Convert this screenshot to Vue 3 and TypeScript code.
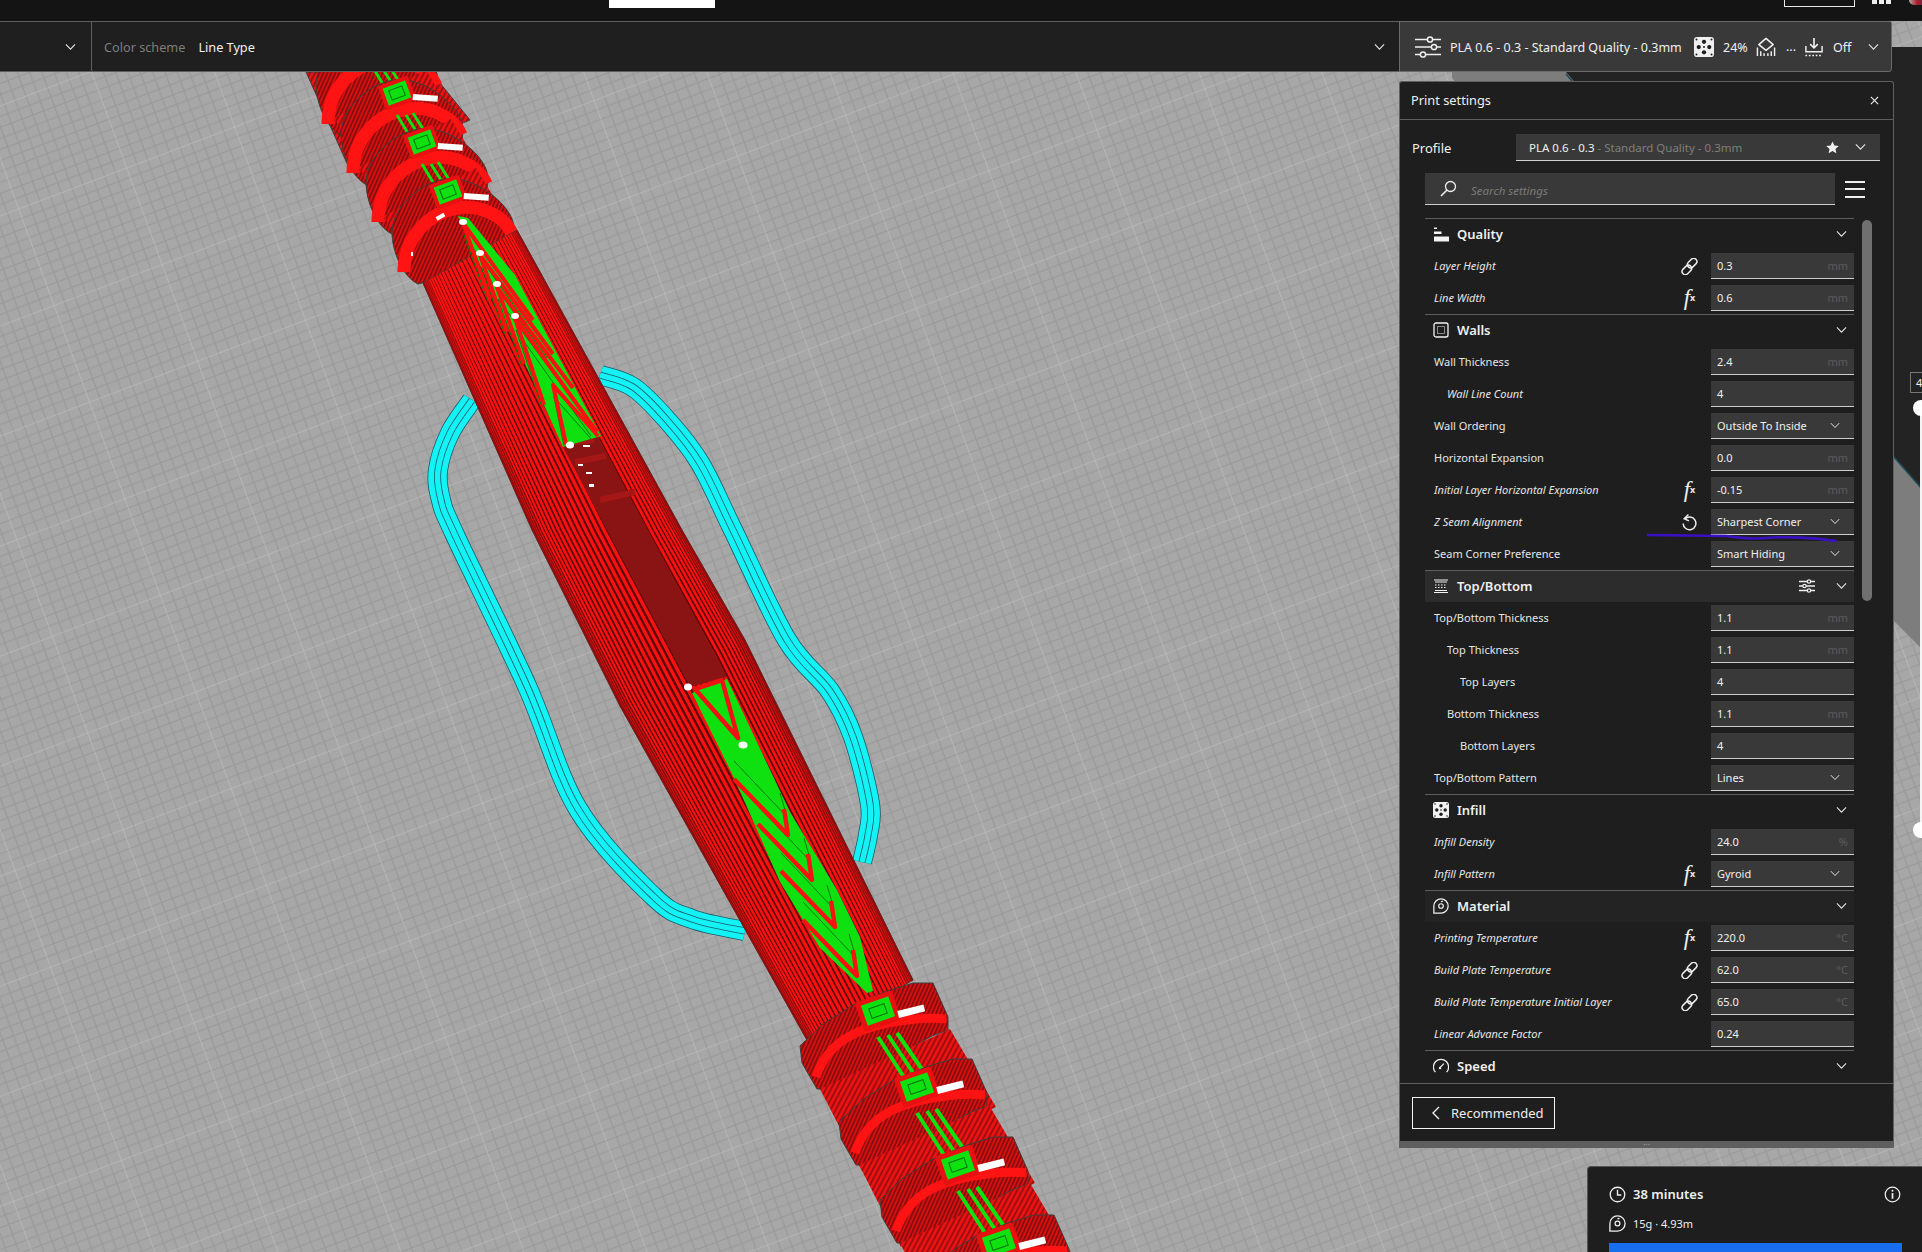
<script setup lang="ts">
type Pt = [number, number]
interface Row {
  label: string
  value: string
  unit?: string
  select?: boolean
  indent?: number
  italic?: boolean
  icon?: 'link' | 'fx' | 'reset'
}
interface Section {
  title: string
  icon: string
  tone?: string
  tune?: boolean
  rows: Row[]
}

const sections: Section[] = [
  {
    title: 'Quality',
    icon: 'i-quality',
    rows: [
      { label: 'Layer Height', value: '0.3', unit: 'mm', italic: true, icon: 'link' },
      { label: 'Line Width', value: '0.6', unit: 'mm', italic: true, icon: 'fx' }
    ]
  },
  {
    title: 'Walls',
    icon: 'i-walls',
    rows: [
      { label: 'Wall Thickness', value: '2.4', unit: 'mm' },
      { label: 'Wall Line Count', value: '4', indent: 1, italic: true },
      { label: 'Wall Ordering', value: 'Outside To Inside', select: true },
      { label: 'Horizontal Expansion', value: '0.0', unit: 'mm' },
      { label: 'Initial Layer Horizontal Expansion', value: '-0.15', unit: 'mm', italic: true, icon: 'fx' },
      { label: 'Z Seam Alignment', value: 'Sharpest Corner', select: true, italic: true, icon: 'reset' },
      { label: 'Seam Corner Preference', value: 'Smart Hiding', select: true }
    ]
  },
  {
    title: 'Top/Bottom',
    icon: 'i-topbottom',
    tone: 'hover',
    tune: true,
    rows: [
      { label: 'Top/Bottom Thickness', value: '1.1', unit: 'mm' },
      { label: 'Top Thickness', value: '1.1', unit: 'mm', indent: 1 },
      { label: 'Top Layers', value: '4', indent: 2 },
      { label: 'Bottom Thickness', value: '1.1', unit: 'mm', indent: 1 },
      { label: 'Bottom Layers', value: '4', indent: 2 },
      { label: 'Top/Bottom Pattern', value: 'Lines', select: true }
    ]
  },
  {
    title: 'Infill',
    icon: 'i-infill',
    rows: [
      { label: 'Infill Density', value: '24.0', unit: '%', italic: true },
      { label: 'Infill Pattern', value: 'Gyroid', select: true, italic: true, icon: 'fx' }
    ]
  },
  {
    title: 'Material',
    icon: 'i-spool',
    tone: 'soft',
    rows: [
      { label: 'Printing Temperature', value: '220.0', unit: '°C', italic: true, icon: 'fx' },
      { label: 'Build Plate Temperature', value: '62.0', unit: '°C', italic: true, icon: 'link' },
      { label: 'Build Plate Temperature Initial Layer', value: '65.0', unit: '°C', italic: true, icon: 'link' },
      { label: 'Linear Advance Factor', value: '0.24', italic: true }
    ]
  },
  { title: 'Speed', icon: 'i-speed', rows: [] }
]

// edges of the long shaft between the upper and lower collars
const shaftL: Pt[] = [[423, 283], [532, 530], [620, 706], [808, 1042]]
const shaftR: Pt[] = [[517, 230], [682, 530], [745, 640], [913, 980]]

const toPoints = (pts: Pt[]) => pts.map((p) => p.join(',')).join(' ')
const shaftOutline = toPoints([...shaftL, ...[...shaftR].reverse()])

// stripes bunch up at the edges, like lines wrapping round a cylinder
const shaftStripes = Array.from({ length: 38 }, (_, k) => {
  const a = ((k + 0.5) / 38) * Math.PI
  const t = (1 - Math.cos(a)) / 2
  const pts = shaftL.map((p, i): Pt => [
    p[0] + (shaftR[i][0] - p[0]) * t,
    p[1] + (shaftR[i][1] - p[1]) * t
  ])
  const s = Math.sin(a)
  return {
    points: toPoints(pts),
    width: 0.4 + s * 3,
    color: s > 0.45 ? '#fa1111' : s > 0.25 ? '#c81010' : '#9c0e0e'
  }
})

// smooth line through the measured skirt points
const smooth = (pts: Pt[]) => {
  let d = `M${pts[0][0]} ${pts[0][1]}`
  for (let i = 0; i < pts.length - 1; i++) {
    const p0 = pts[Math.max(i - 1, 0)]
    const p1 = pts[i]
    const p2 = pts[i + 1]
    const p3 = pts[Math.min(i + 2, pts.length - 1)]
    const c1 = [p1[0] + (p2[0] - p0[0]) / 6, p1[1] + (p2[1] - p0[1]) / 6]
    const c2 = [p2[0] - (p3[0] - p1[0]) / 6, p2[1] - (p3[1] - p1[1]) / 6]
    d += `C${c1[0]} ${c1[1]} ${c2[0]} ${c2[1]} ${p2[0]} ${p2[1]}`
  }
  return d
}
const skirt =
  smooth([[472, 400], [450, 433], [438, 470], [441, 500], [455, 535], [527, 686], [578, 809], [653, 896], [692, 919], [745, 931]]) +
  smooth([[600, 375], [633, 387], [667, 420], [700, 463], [733, 530], [787, 640], [830, 691], [853, 737], [870, 804], [868, 835], [862, 862]])
const skirtBands = [
  { w: 20, c: '#1d5a66' },
  { w: 18.4, c: '#13f2f5' },
  { w: 7, c: '#1d5a66' },
  { w: 5.4, c: '#13f2f5' }
]

const topChevrons: { apex: Pt; left: Pt; right: Pt }[] = [
  { apex: [463, 223], left: [490, 300], right: [533, 320] },
  { apex: [480, 255], left: [507, 332], right: [553, 354] },
  { apex: [497, 287], left: [524, 364], right: [573, 388] },
  { apex: [515, 318], left: [544, 405], right: [597, 432] },
  { apex: [553, 385], left: [566, 444], right: [598, 436] }
]
const lowChevrons: Pt[] = [[788, 835], [812, 880], [835, 927], [857, 976]]
const chevronShade = (c: { apex: Pt; left: Pt; right: Pt }) =>
  toPoints([
    [c.left[0] - 2, c.left[1] + 2],
    [c.apex[0] + 1, c.apex[1] + 12],
    [c.right[0] - 6, c.right[1] + 4]
  ])

const upperRings: Pt[] = [[372, 44], [397, 93], [422, 142], [448, 192]]
const lowerRings: Pt[] = [[878, 1011], [917, 1087], [958, 1165], [999, 1243]]
</script>

<template>
  <div class="app">
    <!-- print preview, everything here is a free canvas behind the UI -->
    <svg class="scene" width="1922" height="1252" viewBox="0 0 1922 1252">
      <defs>
        <pattern
          id="plate"
          width="100"
          height="100"
          patternUnits="userSpaceOnUse"
          patternTransform="matrix(1.08 -0.41 0.354 0.966 122.5 829.3)"
        >
          <rect width="100" height="100" fill="#a7a7a7" />
          <path
            d="M10 0V100M20 0V100M30 0V100M40 0V100M50 0V100M60 0V100M70 0V100M80 0V100M90 0V100M0 10H100M0 20H100M0 30H100M0 40H100M0 50H100M0 60H100M0 70H100M0 80H100M0 90H100"
            stroke="#999999"
            stroke-width="1"
            fill="none"
          />
          <path d="M0 0V100M0 0H100" stroke="#c2c2c2" stroke-width="0.9" fill="none" />
        </pattern>
        <pattern id="hatch" width="4.6" height="10" patternUnits="userSpaceOnUse" patternTransform="rotate(28)">
          <rect width="4.6" height="10" fill="#8c0e0e" />
          <rect x="0.6" width="2.9" height="10" fill="#f01212" />
        </pattern>
        <pattern id="ringhatch" width="3.6" height="10" patternUnits="userSpaceOnUse" patternTransform="rotate(24)">
          <rect width="3.6" height="10" fill="#780c0c" />
          <rect x="0.6" width="2" height="10" fill="#dc1010" />
        </pattern>
        <g id="ring-upper">
          <path
            d="M-56 40C-55 10-20-13 0-13 25-16 60 10 65 30 68 45 62 60 55 70L-30 92C-45 85-56 60-56 40Z"
            fill="url(#ringhatch)"
            stroke="#3d3d3d"
          />
          <path d="M-44 80C-44 42-16 20 10 16 30 13 56 22 64 42" fill="none" stroke="#ff1313" stroke-width="13" />
          <g transform="rotate(-20)">
            <rect x="-14" y="-11" width="28" height="22" rx="1" fill="#0fe00f" stroke="#e81010" stroke-width="4" />
            <rect x="-7" y="-5" width="14" height="10" fill="none" stroke="#0a6e0a" stroke-width="1" />
          </g>
          <rect x="16" y="1" width="25" height="6" fill="#fff" transform="rotate(4 16 1)" />
        </g>
        <g id="ring-lower">
          <path
            d="M-78 35-55 13-25-6 9-20 35-28 55-28 70 6 70 19 54 25-41 78-61 78-76 52Z"
            fill="url(#ringhatch)"
            stroke="#3d3d3d"
            stroke-linejoin="round"
          />
          <path d="M-62 66C-50 30-20 18 10 12 30 8 52 6 68 8" fill="none" stroke="#ff1313" stroke-width="9" />
          <g transform="rotate(-19)">
            <rect x="-17" y="-13" width="34" height="26" rx="1" fill="#0fe00f" stroke="#e81010" stroke-width="5" />
            <rect x="-8" y="-5" width="16" height="10" fill="none" stroke="#0a6e0a" stroke-width="1" />
          </g>
          <rect x="20" y="0" width="27" height="7" fill="#fff" transform="rotate(-14 20 3)" />
        </g>
        <g id="seg-upper">
          <polygon points="-38,74 54,26 82,72 -10,122" fill="url(#hatch)" />
          <path d="M0 22 30 72M9 22 39 70M16 20 46 68" stroke="#0fe00f" stroke-width="3" fill="none" />
        </g>
        <g id="seg-lower">
          <polygon points="-58,78 72,18 118,96 -16,160" fill="url(#hatch)" />
          <path d="M0 26 40 88M10 24 50 84M19 22 59 80" stroke="#0fe00f" stroke-width="4" fill="none" />
        </g>
      </defs>

      <rect width="1922" height="1252" fill="url(#plate)" />
      <polygon points="1566,72 1892,47 1922,47 1922,489 1893,456 1566,78" fill="#232323" />
      <polygon points="1452,72 1566,72 1893,456 1922,489 1922,649 1893,620 1452,78" fill="#7d7d7d" />
      <path d="M1566 74 1893 456 1922 489" fill="none" stroke="#1c4c58" stroke-width="1.5" />

      <!-- skirt round the part -->
      <g fill="none" stroke-linejoin="round">
        <path v-for="(s, i) in skirtBands" :key="i" :d="skirt" :stroke="s.c" :stroke-width="s.w" />
      </g>

      <!-- collars above the shaft -->
      <polygon points="306,72 431,72 470,120 350,170" fill="url(#hatch)" stroke="#3d3d3d" />
      <template v-for="(r, i) in upperRings" :key="'u' + i">
        <use href="#ring-upper" :transform="`translate(${r[0]} ${r[1]})`" />
        <use v-if="i < upperRings.length - 1" href="#seg-upper" :transform="`translate(${r[0]} ${r[1]})`" />
      </template>

      <!-- long shaft -->
      <polygon :points="shaftOutline" fill="#5c0808" stroke="#3d3d3d" />
      <polyline
        v-for="(s, i) in shaftStripes"
        :key="'s' + i"
        :points="s.points"
        fill="none"
        :stroke="s.color"
        :stroke-width="s.width"
      />

      <!-- cut-out at the middle of the shaft -->
      <polygon points="563,447 598,437 727,677 690,687" fill="#8a1414" />
      <path d="M570 442 594 440M575 462 606 456M600 500 635 492" stroke="#a51616" stroke-width="6" fill="none" />

      <!-- green infill wedges -->
      <polygon points="458,216 468,218 515,275 601,436 563,447" fill="#0fe00f" />
      <polyline
        v-for="(c, i) in topChevrons"
        :key="'g' + i"
        :points="chevronShade(c)"
        fill="none"
        stroke="#0a7a0a"
        stroke-width="1"
      />
      <polyline
        v-for="(c, i) in topChevrons"
        :key="'t' + i"
        :points="toPoints([c.left, c.apex, c.right])"
        fill="none"
        stroke="#fa1111"
        stroke-width="4"
        stroke-linejoin="round"
      />
      <polygon points="692,693 727,679 790,812 837,890 860,937 873,991 867,993 820,948 780,882 735,780" fill="#0fe00f" />
      <polygon points="695,689 722,680 738,738" fill="#0fe00f" stroke="#f01212" stroke-width="4.5" stroke-linejoin="round" />
      <polyline
        v-for="(a, i) in lowChevrons"
        :key="'d' + i"
        :points="toPoints([[a[0] - 54, a[1] - 74], [a[0] - 1, a[1] - 18], [a[0] - 8, a[1] - 42]])"
        fill="none"
        stroke="#0a7a0a"
        stroke-width="1"
      />
      <polyline
        v-for="(a, i) in lowChevrons"
        :key="'v' + i"
        :points="toPoints([[a[0] - 54, a[1] - 56], a, [a[0] - 4, a[1] - 26]])"
        fill="none"
        stroke="#fa1111"
        stroke-width="4.4"
        stroke-linejoin="round"
      />
      <g fill="#fff">
        <ellipse cx="463" cy="222" rx="4" ry="3" />
        <ellipse cx="480" cy="253" rx="4" ry="3" />
        <ellipse cx="497" cy="284" rx="4" ry="3" />
        <ellipse cx="515" cy="316" rx="4" ry="3" />
        <ellipse cx="570" cy="445" rx="4" ry="3.5" />
        <ellipse cx="688" cy="687" rx="4" ry="3.5" />
        <ellipse cx="743" cy="745" rx="4.5" ry="3.5" />
        <rect x="583" y="445" width="7" height="2" />
        <rect x="578" y="464" width="5" height="2" />
        <rect x="586" y="472" width="6" height="2" />
        <rect x="589" y="484" width="5" height="3" />
        <rect x="436" y="215" width="9" height="4" transform="rotate(-30 440 217)" />
        <rect x="411" y="252" width="2" height="4" />
      </g>

      <!-- collars below the shaft -->
      <template v-for="(r, i) in lowerRings" :key="'l' + i">
        <use href="#ring-lower" :transform="`translate(${r[0]} ${r[1]})`" />
        <use v-if="i < lowerRings.length - 1" href="#seg-lower" :transform="`translate(${r[0]} ${r[1]})`" />
      </template>

      <!-- shared icons -->
      <symbol id="i-chevron" viewBox="0 0 12 8">
        <path d="M1 1.2 6 6.4 11 1.2" fill="none" stroke="currentColor" stroke-width="1.2" />
      </symbol>
      <symbol id="i-quality" viewBox="0 0 16 16">
        <path d="M1 1.500H4V3H1ZM1 5.500H8.500V8H1ZM1 10.500H16V15.500H1Z" fill="currentColor" />
      </symbol>
      <symbol id="i-walls" viewBox="0 0 16 16">
        <rect x="1" y="1" width="14" height="14" rx="2" fill="none" stroke="currentColor" stroke-width="1.300" />
        <rect x="4.500" y="4.500" width="7" height="7" fill="none" stroke="currentColor" stroke-dasharray="1 1" />
      </symbol>
      <symbol id="i-topbottom" viewBox="0 0 16 16">
        <path d="M1 2H15M2 4H14M1 14.500H15M2 12.500H14" stroke="currentColor" fill="none" />
        <path d="M2 7H14M2 9.500H14" stroke="currentColor" stroke-dasharray="1.500 1.500" fill="none" />
      </symbol>
      <symbol id="i-infill" viewBox="0 0 16 16">
        <rect width="16" height="16" rx="2.500" fill="currentColor" />
        <g fill="#1e1e1e">
          <circle cx="8" cy="3.800" r="1.700" />
          <circle cx="8" cy="12.200" r="1.700" />
          <circle cx="3.800" cy="8" r="1.700" />
          <circle cx="12.200" cy="8" r="1.700" />
          <circle cx="8" cy="8" r="0.800" />
          <circle cx="2" cy="2" r="0.800" />
          <circle cx="14" cy="2" r="0.800" />
          <circle cx="2" cy="14" r="0.800" />
          <circle cx="14" cy="14" r="0.800" />
        </g>
      </symbol>
      <symbol id="i-spool" viewBox="0.6 0.6 16.800 16.800">
        <path d="M1.500 16.500V9A7.500 7.500 0 1 1 9 16.500Z" fill="none" stroke="currentColor" stroke-width="1.300" />
        <circle cx="9" cy="9" r="2.400" fill="none" stroke="currentColor" stroke-width="1.200" />
        <path d="M9 4.500 11 3.900" stroke="currentColor" stroke-width="1.200" />
      </symbol>
      <symbol id="i-speed" viewBox="0.6 0.6 16.800 16.800">
        <path d="M3.200 15.500A8 8 0 1 1 14.800 15.500" fill="none" stroke="currentColor" stroke-width="1.300" />
        <path d="M8.200 10.500 12 6.500" stroke="currentColor" stroke-width="1.300" />
        <circle cx="8" cy="11" r="1.300" fill="currentColor" />
      </symbol>
      <symbol id="i-link" viewBox="0 0 16 16">
        <g fill="none" stroke="currentColor" stroke-width="1.400">
          <rect x="5.500" y="1.800" width="10" height="6" rx="3" transform="rotate(-45 10.500 4.800)" />
          <rect x="0.500" y="8.200" width="10" height="6" rx="3" transform="rotate(-45 5.500 11.200)" />
        </g>
      </symbol>
      <symbol id="i-reset" viewBox="0 0 16 16">
        <path d="M3.800 4.500A6 6 0 1 1 2 9" fill="none" stroke="currentColor" stroke-width="1.400" />
        <path d="M7 0.500 3 4.500 7.500 6.500" fill="none" stroke="currentColor" stroke-width="1.400" />
      </symbol>
      <symbol id="i-tune" viewBox="0 0 16 14">
        <path d="M0 2.500H16M0 7H16M0 11.500H16" stroke="currentColor" stroke-width="1.300" />
        <circle cx="10" cy="2.500" r="1.700" fill="#2c2c2c" stroke="currentColor" stroke-width="1.200" />
        <circle cx="5.500" cy="7" r="1.700" fill="#2c2c2c" stroke="currentColor" stroke-width="1.200" />
        <circle cx="10" cy="11.500" r="1.700" fill="#2c2c2c" stroke="currentColor" stroke-width="1.200" />
      </symbol>
      <symbol id="i-clock" viewBox="0 0 18 18">
        <circle cx="9" cy="9" r="7.700" fill="none" stroke="currentColor" stroke-width="1.400" />
        <path d="M9 4V9.500H13" fill="none" stroke="currentColor" stroke-width="1.400" />
      </symbol>
      <symbol id="i-info" viewBox="0 0 18 18">
        <circle cx="9" cy="9" r="7.700" fill="none" stroke="currentColor" stroke-width="1.300" />
        <path d="M9 7.500V13.500" stroke="currentColor" stroke-width="1.800" />
        <circle cx="9" cy="5" r="1.100" fill="currentColor" />
      </symbol>
    </svg>

    <div class="topbar">
      <span class="top-white"></span>
      <span class="top-outline"></span>
      <span class="top-dots"><i></i><i></i><i></i></span>
      <span class="top-avatar"></span>
    </div>

    <header class="stagebar">
      <div class="stage-left">
        <svg class="chev"><use href="#i-chevron" /></svg>
      </div>
      <div class="stage-mid">
        <span class="scheme-label">Color scheme</span>
        <span class="scheme-value">Line Type</span>
        <svg class="chev scheme-chev"><use href="#i-chevron" /></svg>
      </div>
      <div class="stage-right">
        <svg class="hd-sliders" viewBox="0 0 26 22">
          <path d="M0 3.500H26M0 11H26M0 18.500H26" stroke="currentColor" stroke-width="1.500" />
          <circle cx="15" cy="3.500" r="2.600" fill="#393939" stroke="currentColor" stroke-width="1.500" />
          <circle cx="19" cy="11" r="2.600" fill="#393939" stroke="currentColor" stroke-width="1.500" />
          <circle cx="8" cy="18.500" r="2.600" fill="#393939" stroke="currentColor" stroke-width="1.500" />
        </svg>
        <span class="hd-profile">PLA 0.6 - 0.3 - Standard Quality - 0.3mm</span>
        <svg class="hd-icon infill-i"><use href="#i-infill" /></svg>
        <span class="hd-infill">24%</span>
        <svg class="hd-icon support-i" viewBox="0 0 20 21">
          <path d="M10 1.500 17.500 8 10 14 2.500 8Z" fill="none" stroke="currentColor" stroke-width="1.600" stroke-linejoin="round" />
          <path d="M1 11V20M4.500 15V20M8 17V20M12 17V20M15.500 15V20M19 11V20" stroke="currentColor" stroke-width="1.500" />
        </svg>
        <span class="hd-dots">...</span>
        <svg class="hd-icon adhesion-i" viewBox="0 0 20 21">
          <path d="M10 1V11M6 7.500 10 11.500 14 7.500" fill="none" stroke="currentColor" stroke-width="1.700" />
          <path d="M1.500 9.500V15.500H18.500V9.500" fill="none" stroke="currentColor" stroke-width="1.500" />
          <path d="M1 19.500H19" stroke="currentColor" stroke-width="1.500" stroke-dasharray="1.800 1.800" />
        </svg>
        <span class="hd-off">Off</span>
        <svg class="chev hd-chev"><use href="#i-chevron" /></svg>
      </div>
    </header>

    <!-- floats over the viewport -->
    <aside class="panel">
      <div class="panel-title">
        <span>Print settings</span>
        <svg class="close" viewBox="0 0 10 10"><path d="M1 1 9 9M9 1 1 9" stroke="currentColor" stroke-width="1.200" /></svg>
      </div>
      <div class="profile-row">
        <span class="profile-label">Profile</span>
        <div class="profile-box">
          <span class="profile-name">PLA 0.6 - 0.3<em> - Standard Quality - 0.3mm</em></span>
          <svg class="star" viewBox="0 0 14 14"><path d="M7 .6 9 4.900 13.700 5.400 10.200 8.600 11.200 13.300 7 10.900 2.800 13.300 3.800 8.600.3 5.400 5 4.900Z" fill="currentColor" /></svg>
          <svg class="chev"><use href="#i-chevron" /></svg>
        </div>
      </div>
      <div class="search-row">
        <div class="search-box">
          <svg class="search-i" viewBox="0 0 17 17"><circle cx="10.500" cy="6.500" r="5" fill="none" stroke="currentColor" stroke-width="1.300" /><path d="M7 10 1 16" stroke="currentColor" stroke-width="1.600" /></svg>
          <span class="search-text">Search settings</span>
        </div>
        <div class="burger"><i></i><i></i><i></i></div>
      </div>
      <div class="settings">
        <div class="list">
          <section v-for="sec in sections" :key="sec.title" class="section">
            <div class="sec-head" :class="sec.tone">
              <svg class="sec-icon"><use :href="'#' + sec.icon" /></svg>
              <span class="sec-title">{{ sec.title }}</span>
              <svg v-if="sec.tune" class="sec-tune"><use href="#i-tune" /></svg>
              <svg class="chev sec-chev"><use href="#i-chevron" /></svg>
            </div>
            <div v-for="row in sec.rows" :key="row.label" class="row">
              <span class="row-label" :class="[{ italic: row.italic }, row.indent ? 'indent-' + row.indent : '']">{{ row.label }}</span>
              <span v-if="row.icon === 'fx'" class="row-icon fx">f<sub>x</sub></span>
              <svg v-else-if="row.icon" class="row-icon"><use :href="'#i-' + row.icon" /></svg>
              <div class="field">
                <span class="field-value">{{ row.value }}</span>
                <span v-if="row.unit" class="field-unit">{{ row.unit }}</span>
                <svg v-if="row.select" class="chev field-chev"><use href="#i-chevron" /></svg>
              </div>
            </div>
          </section>
        </div>
        <div class="scrollbar"></div>
      </div>
      <div class="panel-foot">
        <button class="back">
          <svg viewBox="0 0 9 14"><path d="M8 1 2 7 8 13" fill="none" stroke="currentColor" stroke-width="1.400" /></svg>
          Recommended
        </button>
      </div>
      <div class="grip"><span>···</span></div>
    </aside>

    <svg class="scribble" width="200" height="12" viewBox="0 0 200 12">
      <path d="M2 3 80 4C100 7 110 7 120 6 140 4 170 6 190 9" fill="none" stroke="#3a10c4" stroke-width="2.600" stroke-linecap="round" />
    </svg>

    <div class="slider">
      <span class="slider-label">4</span>
      <span class="slider-knob top"></span>
      <span class="slider-knob bottom"></span>
    </div>

    <div class="summary">
      <div class="sum-row">
        <svg class="sum-icon"><use href="#i-clock" /></svg>
        <span class="sum-time">38 minutes</span>
        <svg class="sum-icon sum-info"><use href="#i-info" /></svg>
      </div>
      <div class="sum-row second">
        <svg class="sum-icon"><use href="#i-spool" /></svg>
        <span class="sum-mat">15g · 4.93m</span>
      </div>
      <div class="slice"></div>
    </div>
  </div>
</template>

<style scoped>
.app {
  position: relative;
  width: 1922px;
  height: 1252px;
  overflow: hidden;
  font-family: 'Noto Sans', 'Open Sans', sans-serif;
  color: #f0f0f0;
}
.scene {
  position: absolute;
  left: 0;
  top: 0;
}
.chev {
  width: 11px;
  height: 8px;
  color: #e4e4e4;
  flex: none;
}

.topbar {
  position: relative;
  display: flex;
  align-items: flex-start;
  height: 21px;
  padding-left: 609px;
  background: #141414;
}
.topbar > span {
  flex: none;
}
.top-white {
  width: 106px;
  height: 8px;
  background: #fff;
}
.top-outline {
  width: 71px;
  height: 7px;
  margin-left: 1069px;
  border: 1px solid #e8e8e8;
  border-top: 0;
  box-sizing: border-box;
}
.top-dots {
  display: flex;
  gap: 2px;
  margin-left: 17px;
}
.top-dots i {
  width: 5px;
  height: 4px;
  background: #eee;
}
.top-avatar {
  width: 20px;
  height: 5px;
  margin-left: 18px;
  border-radius: 0 0 0 14px;
  background: linear-gradient(90deg, #aaa, #b01c2c 40%, #24345c);
}

.stagebar {
  position: relative;
  display: flex;
  width: 1892px;
  height: 51px;
}
.stage-left {
  display: flex;
  align-items: center;
  justify-content: flex-end;
  width: 92px;
  padding-right: 15px;
  box-sizing: border-box;
  background: #1f1f1f;
  border: solid #5e5e5e;
  border-width: 1px 1px 1px 0;
}
.stage-mid {
  display: flex;
  flex: 1;
  align-items: center;
  padding-left: 12px;
  padding-right: 14px;
  background: #1f1f1f;
  border: solid #5e5e5e;
  border-width: 1px 0;
  font-size: 12.7px;
}
.scheme-label {
  color: #7d7d7d;
  margin-top: 1px;
}
.scheme-value {
  margin-left: 13px;
  margin-top: 1px;
}
.scheme-chev {
  margin-left: auto;
}
.stage-right {
  display: flex;
  align-items: center;
  width: 493px;
  box-sizing: border-box;
  padding-left: 15px;
  background: #393939;
  border: 1px solid #6b6b6b;
  border-radius: 0 2px 3px 0;
  font-size: 12.5px;
}
.hd-sliders {
  width: 26px;
  height: 22px;
  flex: none;
}
.hd-profile {
  margin-left: 9px;
  margin-top: 1px;
  width: 244px;
  white-space: nowrap;
}
.hd-icon {
  width: 20px;
  height: 20px;
  flex: none;
}
.hd-infill {
  margin-left: 9px;
  margin-top: 1px;
  width: 33px;
}
.hd-dots {
  margin-left: 10px;
  width: 18px;
}
.hd-off {
  margin-left: 9px;
  margin-top: 1px;
  width: 35px;
}

.panel {
  position: absolute;
  left: 1399px;
  top: 81px;
  display: flex;
  flex-direction: column;
  width: 495px;
  height: 1067px;
  box-sizing: border-box;
  background: #1e1e1e;
  border: 1px solid #606060;
  border-bottom: 0;
  border-radius: 3px 3px 0 0;
}
.panel-title {
  display: flex;
  align-items: center;
  justify-content: space-between;
  flex: none;
  padding: 0 12px 1px 11px;
  box-sizing: content-box;
  height: 36px;
  border-bottom: 1px solid #5e5e5e;
  font-size: 12.8px;
}
.close {
  width: 9px;
  height: 9px;
  margin-right: 2px;
}
.profile-row {
  display: flex;
  align-items: center;
  justify-content: space-between;
  flex: none;
  height: 27px;
  margin-top: 14px;
  padding: 0 13px 0 12px;
  font-size: 13px;
}
.profile-box {
  display: flex;
  align-items: center;
  width: 364px;
  height: 27px;
  box-sizing: border-box;
  padding: 0 14px 0 13px;
  background: #393939;
  border-bottom: 1px solid #cfcfcf;
  font-size: 11.5px;
}
.profile-name {
  flex: 1;
}
.profile-name em {
  font-style: normal;
  color: #7f7f7f;
}
.star {
  width: 13px;
  height: 13px;
  margin-right: 16px;
}
.search-row {
  display: flex;
  align-items: center;
  flex: none;
  height: 32px;
  margin-top: 12px;
  padding-left: 25px;
}
.search-box {
  display: flex;
  align-items: center;
  width: 410px;
  height: 32px;
  box-sizing: border-box;
  padding-left: 15px;
  background: #393939;
  border-bottom: 1px solid #cfcfcf;
  font-size: 11.5px;
  font-style: italic;
  color: #7a7a7a;
}
.search-text {
  padding-top: 3px;
}
.search-i {
  width: 17px;
  height: 17px;
  margin-right: 14px;
  color: #eee;
}
.burger {
  display: flex;
  flex-direction: column;
  justify-content: space-between;
  width: 20px;
  height: 17px;
  margin-left: 10px;
}
.burger i {
  height: 2px;
  background: #eee;
}
.settings {
  position: relative;
  flex: 1;
  margin-top: 13px;
  padding-left: 25px;
  overflow: hidden;
}
.list {
  width: 429px;
}
.section {
  font-size: 11px;
}
.sec-head {
  display: flex;
  align-items: center;
  height: 32px;
  box-sizing: border-box;
  padding: 0 7px 2px 8px;
  border-top: 1px solid #5e5e5e;
}
.sec-head.hover {
  background: #2c2c2c;
}
.sec-head.soft {
  background: #232323;
}
.sec-icon {
  width: 16px;
  height: 16px;
  flex: none;
  color: #f2f2f2;
}
.sec-title {
  margin-left: 8px;
  font-size: 13px;
  font-weight: 600;
}
.sec-tune {
  width: 16px;
  height: 14px;
  margin-left: auto;
  margin-right: 21px;
}
.sec-chev {
  margin-left: auto;
}
.sec-tune + .sec-chev {
  margin-left: 0;
}
.row {
  display: flex;
  align-items: center;
  height: 32px;
}
.row-label {
  flex: 1;
  margin-left: 9px;
  margin-bottom: 2px;
  color: #e6e6e6;
  white-space: nowrap;
}
.row-label.italic {
  font-style: italic;
}
.row-label.indent-1 {
  margin-left: 22px;
}
.row-label.indent-2 {
  margin-left: 35px;
}
.row-icon {
  width: 17px;
  height: 17px;
  margin-right: 13px;
  color: #eee;
  flex: none;
}
.row-icon.fx {
  display: flex;
  align-items: center;
  justify-content: center;
  height: 20px;
  font-family: 'Liberation Serif', serif;
  font-size: 23px;
  font-style: italic;
  line-height: 20px;
}
.row-icon.fx sub {
  font-family: 'Noto Sans', sans-serif;
  font-size: 9px;
  font-style: normal;
  font-weight: 700;
  line-height: 0;
  vertical-align: -5px;
}
.field {
  display: flex;
  align-items: center;
  flex: none;
  width: 143px;
  height: 26px;
  box-sizing: border-box;
  padding: 0 6px;
  background: #393939;
  border-bottom: 1px solid #cfcfcf;
  font-size: 11px;
}
.field-value {
  flex: 1;
  white-space: nowrap;
}
.field-unit {
  color: #5b5b5b;
}
.field-chev {
  width: 10px;
  height: 7px;
  margin-right: 8px;
}
.scrollbar {
  position: absolute;
  left: 462px;
  top: 2px;
  width: 10px;
  height: 381px;
  border-radius: 5px;
  background: #707070;
}
.panel-foot {
  display: flex;
  align-items: center;
  flex: none;
  height: 57px;
  padding-left: 12px;
  border-top: 1px solid #5e5e5e;
}
.back {
  display: flex;
  align-items: center;
  width: 143px;
  height: 32px;
  box-sizing: border-box;
  padding-left: 18px;
  background: transparent;
  border: 1px solid #f4f4f4;
  color: #eee;
  font-family: inherit;
  font-size: 13px;
}
.back svg {
  width: 9px;
  height: 14px;
  margin-right: 11px;
}
.grip {
  display: flex;
  align-items: center;
  justify-content: center;
  flex: none;
  height: 7px;
  background: #5e5e5e;
  color: #999;
  font-size: 9px;
  line-height: 7px;
}

.scribble {
  position: absolute;
  left: 1646px;
  top: 532px;
}

.slider {
  position: absolute;
  left: 1920px;
  top: 408px;
  width: 2px;
  height: 422px;
  background: #f4f4f4;
}
.slider-label {
  position: absolute;
  left: -10px;
  top: -36px;
  width: 14px;
  height: 21px;
  box-sizing: border-box;
  padding-left: 5px;
  background: #232323;
  border: 1px solid #777;
  font-size: 11px;
  line-height: 19px;
}
.slider-knob {
  position: absolute;
  left: -7px;
  width: 16px;
  height: 16px;
  border-radius: 50%;
  background: #fff;
}
.slider-knob.top {
  top: -8px;
}
.slider-knob.bottom {
  bottom: -8px;
}

.summary {
  position: absolute;
  right: 0;
  top: 1166px;
  width: 335px;
  height: 86px;
  box-sizing: border-box;
  padding: 18px 20px 0 21px;
  background: #1e1e1e;
  border: solid #555;
  border-width: 1px 0 0 1px;
  border-radius: 4px 0 0 0;
}
.sum-row {
  display: flex;
  align-items: center;
  height: 18px;
}
.sum-row.second {
  margin-top: 11px;
}
.sum-icon {
  width: 17px;
  height: 17px;
  flex: none;
}
.sum-time {
  margin-left: 7px;
  font-size: 13px;
  font-weight: 600;
}
.sum-info {
  margin-left: auto;
  margin-right: 1px;
}
.sum-mat {
  margin-left: 7px;
  font-size: 11px;
}
.slice {
  height: 10px;
  margin-top: 11px;
  background: #196ef0;
}
</style>

<style>
html,
body {
  margin: 0;
  background: #1e1e1e;
}
</style>
